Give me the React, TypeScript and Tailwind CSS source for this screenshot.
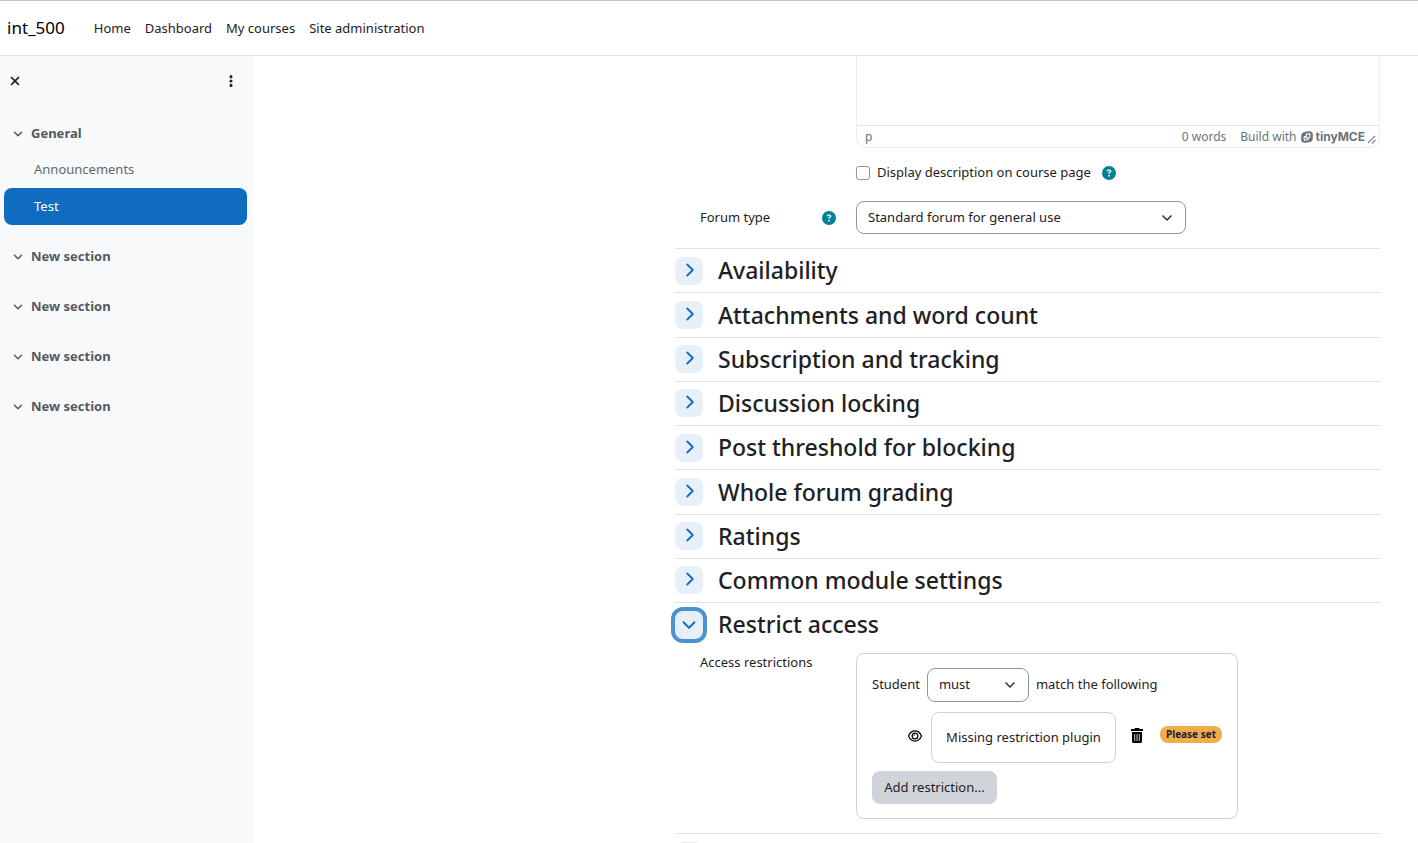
import { useState } from "react";
import type { ReactNode } from "react";
import { ChevronDown, ChevronRight } from "lucide-react";
import { FaCircleQuestion, FaEllipsisVertical, FaXmark } from "react-icons/fa6";

const navLinks = ["Home", "Dashboard", "My courses", "Site administration"];

const collapsedSections = [
  "Availability",
  "Attachments and word count",
  "Subscription and tracking",
  "Discussion locking",
  "Post threshold for blocking",
  "Whole forum grading",
  "Ratings",
  "Common module settings",
];

function Header() {
  return (
    <header className="flex h-14 shrink-0 items-center border-t border-b border-t-[#c4c4c4] border-b-[#dee2e6] bg-white px-[7px]">
      <a href="#" className="text-[17px] text-black">
        int_500
      </a>
      <nav className="ml-[29px] flex gap-[14px] pt-[2px]">
        {navLinks.map((link) => (
          <a key={link} href="#" className="text-[13px] text-[#1d2125]">
            {link}
          </a>
        ))}
      </nav>
    </header>
  );
}

function IndexSection({ title, children }: { title: string; children?: ReactNode }) {
  return (
    <section>
      <button type="button" className="flex h-9 w-full items-center gap-[6px] pl-[11px] text-[13px] font-bold text-[#55595d]">
        <ChevronDown className="size-[14px]" strokeWidth={2.5} aria-hidden="true" />
        {title}
      </button>
      {children}
    </section>
  );
}

function Sidebar() {
  return (
    <aside className="w-[253px] shrink-0 bg-[#f8f9fb]">
      <div className="flex h-[50px] items-center justify-between pr-[15px] pl-2">
        <button type="button" aria-label="Close course index" className="text-[#1d2125]">
          <FaXmark className="size-[14px]" />
        </button>
        <button type="button" aria-label="Course index options" className="text-[#1d2125]">
          <FaEllipsisVertical className="size-[14px]" />
        </button>
      </div>
      <div className="flex flex-col gap-[14px] pt-[10px]">
        <IndexSection title="General">
          <ul className="px-1 text-[13px]">
            <li>
              <a href="#" className="flex h-9 items-center pl-[30px] text-[#63676b]">
                Announcements
              </a>
            </li>
            <li>
              <a href="#" className="mr-[2px] flex h-[37px] items-center rounded-lg bg-[#0f6cbf] pl-[30px] text-white">
                Test
              </a>
            </li>
          </ul>
        </IndexSection>
        <IndexSection title="New section" />
        <IndexSection title="New section" />
        <IndexSection title="New section" />
        <IndexSection title="New section" />
      </div>
    </aside>
  );
}

function HelpButton({ label }: { label: string }) {
  return (
    <button type="button" aria-label={label} className="text-[#008196]">
      <FaCircleQuestion className="size-[14px]" />
    </button>
  );
}

function TinyLogo() {
  return (
    <svg viewBox="0 0 24 24" className="size-3" aria-hidden="true">
      <path
        fill="currentColor"
        d="M9 1.500 15 .6C20.500-.2 24 2.500 23.800 7.500L23.500 15C23.200 19.500 20.500 22 16 22.500L9 23.400C3.500 24.200 0 21.500.2 16.500L.5 9C.8 4.500 4 2.200 9 1.500Z"
      />
      <path fill="none" stroke="#fff" strokeWidth="2.200" strokeLinejoin="round" d="M10.500 6.300 17.800 5.500V13L14.200 13.500V17.500L6.500 18.400V11L10.500 10.500ZM10.500 10.500V13.800L14.200 13.500" />
    </svg>
  );
}

function Editor() {
  return (
    <div className="rounded-b-[10px] border border-t-0 border-[#eeeeee]">
      <div className="h-[69px]" />
      <div className="flex h-[22px] items-center border-t border-[#e3e3e3] pr-[3px] pl-2 text-xs text-[#6a737b]">
        <span>p</span>
        <span className="ml-auto">0 words</span>
        <a href="#" className="ml-[14px] flex items-center gap-[5px]">
          Build with
          <span className="flex items-center gap-[2px] font-[Inter] text-xs font-bold">
            <TinyLogo />
            tinyMCE
          </span>
        </a>
        <svg viewBox="0 0 10 10" className="mb-[3px] ml-[2px] size-[9px] self-end" fill="none" stroke="currentColor" strokeWidth="1.200" aria-hidden="true">
          <path d="M1 9 9 1M5.500 9.500 9.500 5.500" />
        </svg>
      </div>
    </div>
  );
}

function Select({ id, options, className }: { id: string; options: string[]; className: string }) {
  return (
    <span className={"relative inline-flex " + className}>
      <select
        id={id}
        className="h-full w-full appearance-none rounded-lg border border-[#8f959e] bg-white pr-8 pl-[11px] text-[13px] text-[#1d2125]"
      >
        {options.map((option) => (
          <option key={option}>{option}</option>
        ))}
      </select>
      <ChevronDown className="pointer-events-none absolute top-1/2 right-[11px] size-4 -translate-y-1/2 text-[#343a40]" strokeWidth={2.5} aria-hidden="true" />
    </span>
  );
}

function SectionHeading({ title, label, open }: { title?: string; label?: string; open: boolean }) {
  const Icon = open ? ChevronDown : ChevronRight;
  return (
    <div className="flex items-center gap-[15px] border-t border-[#dee2e6]">
      <button
        type="button"
        aria-label={label ?? title}
        aria-expanded={open}
        className={
          open
            ? "flex size-7 items-center justify-center rounded-lg bg-[#e7f0f9] text-[#0f6cbf] ring-4 ring-[#4b92d1]"
            : "flex size-7 items-center justify-center rounded-lg bg-[#e7f0f9] pb-[2px] pl-[2px] text-[#0f6cbf]"
        }
      >
        <Icon className="size-[22px]" strokeWidth={2} />
      </button>
      {title && <h3 className="text-[23px] font-medium text-[#1d2125]">{title}</h3>}
    </div>
  );
}

function EyeIcon() {
  return (
    <svg viewBox="0 0 16 16" className="size-4" fill="none" stroke="currentColor" strokeWidth="1.200" aria-hidden="true">
      <path d="M1.500 8C3 4.500 5.300 2.900 8 2.900S13 4.500 14.500 8C13 11.500 10.700 13.100 8 13.100S3 11.500 1.500 8Z" />
      <circle cx="8" cy="8" r="2.900" />
      <path d="M6.700 8.200C6.700 7.300 7.300 6.700 8.200 6.700" strokeWidth=".9" />
    </svg>
  );
}

function TrashIcon() {
  return (
    <svg viewBox="0 0 12 15" className="h-[15px] w-3" aria-hidden="true">
      <path fill="currentColor" d="M4 0h4l.6 1H12v2H0V1h3.400ZM1 4h10v9.500c0 .8-.7 1.500-1.500 1.500h-7C1.700 15 1 14.300 1 13.500Z" />
      <path stroke="#fff" strokeWidth=".8" d="M3.700 6v7M6 6v7M8.300 6v7" />
    </svg>
  );
}

function RestrictionBox() {
  return (
    <div className="w-fit rounded-lg border border-[#ced0d3] px-[15px] py-[14px] text-[13px]">
      <div className="flex items-center gap-[7px]">
        <label htmlFor="match">Student</label>
        <Select id="match" options={["must", "must not"]} className="h-[34px] w-[102px]" />
        <span>match the following</span>
      </div>
      <div className="mt-[10px] flex items-center pl-[35px]">
        <button type="button" aria-label="Displayed if student doesn't meet this condition" className="mb-1 text-black">
          <EyeIcon />
        </button>
        <div className="ml-2 flex h-[51px] w-[185px] items-center justify-center rounded-lg border border-[#ced0d3]">
          Missing restriction plugin
        </div>
        <button type="button" aria-label="Delete" className="mb-1 ml-[15px] text-black">
          <TrashIcon />
        </button>
        <span className="mb-[6px] ml-[17px] flex h-[17px] w-[62px] items-center justify-center rounded-lg bg-[#f0ad4e] text-[10px] font-bold">
          Please set
        </span>
      </div>
      <button type="button" className="mt-2 h-[33px] w-[125px] rounded-lg bg-[#ced4da]">
        Add restriction...
      </button>
    </div>
  );
}

function ForumForm() {
  const [described, setDescribed] = useState(false);
  return (
    <form className="mr-[38px] ml-auto w-[705px] max-w-full shrink-0 text-[13px]">
      <div className="grid grid-cols-[156px_1fr] pl-[25px]">
        <div className="col-start-2">
          <Editor />
          <div className="mt-[15px] flex h-5 items-center">
            <input
              id="show-description"
              type="checkbox"
              checked={described}
              onChange={(event) => setDescribed(event.target.checked)}
              className="size-[14px] appearance-none rounded-[3px] border border-[#8f959e] checked:bg-[#0f6cbf]"
            />
            <label htmlFor="show-description" className="mr-[11px] ml-[7px]">
              Display description on course page
            </label>
            <HelpButton label="Help with display description on course page" />
          </div>
        </div>
        <div className="mt-[18px] flex items-center justify-between pr-5">
          <label htmlFor="forum-type">Forum type</label>
          <HelpButton label="Help with forum type" />
        </div>
        <Select id="forum-type" options={["Standard forum for general use"]} className="mt-[18px] h-[33px] w-[330px]" />
      </div>
      <div className="mt-[14px] grid min-h-[354px] auto-rows-fr">
        {collapsedSections.map((title) => (
          <SectionHeading key={title} title={title} open={false} />
        ))}
      </div>
      <div className="grid auto-rows-[44px]">
        <SectionHeading title="Restrict access" open />
      </div>
      <div className="mt-[7px] mb-[14px] grid grid-cols-[156px_1fr] pl-[25px]">
        <span>Access restrictions</span>
        <RestrictionBox />
      </div>
      <div className="grid auto-rows-[44px]">
        <SectionHeading label="Expand section" open={false} />
      </div>
    </form>
  );
}

export default function App() {
  return (
    <div className="flex h-screen flex-col overflow-hidden bg-white font-['Noto_Sans',sans-serif] text-[#1d2125]">
      <Header />
      <div className="flex min-h-0 flex-1">
        <Sidebar />
        <main className="flex min-w-0 flex-1 items-start overflow-hidden">
          <ForumForm />
        </main>
      </div>
    </div>
  );
}
